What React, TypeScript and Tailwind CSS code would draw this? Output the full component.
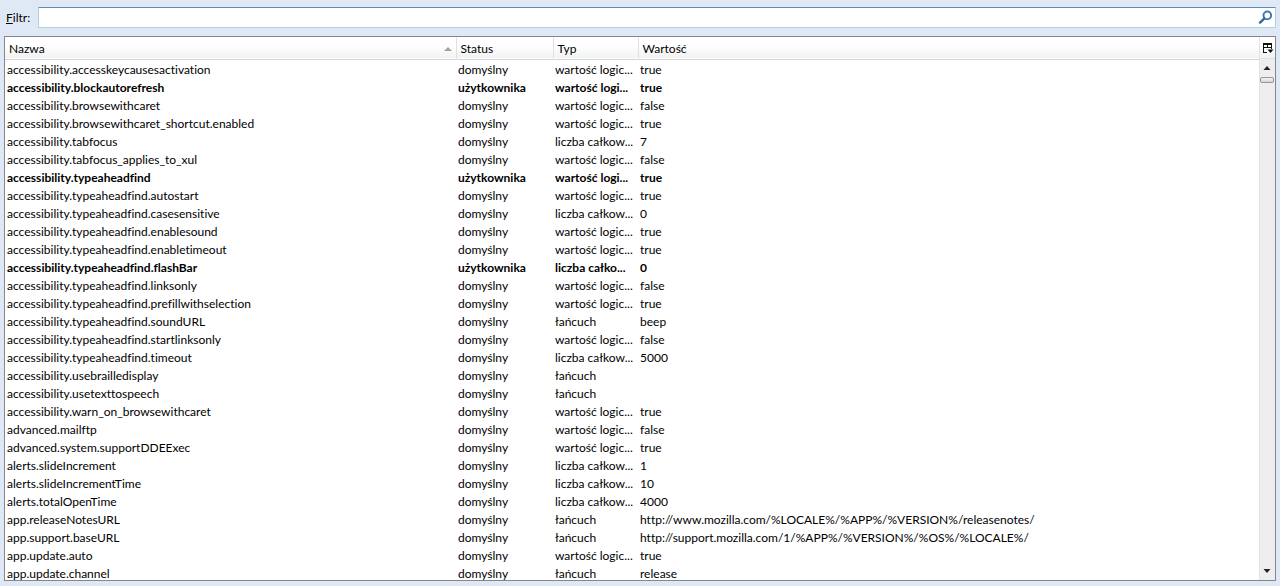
import { useState } from "react";

type TPref = {
  name: string;
  type: string;
  value: string;
  modified?: boolean;
};

const BOOL = "wartość logic...";
const INT = "liczba całkow...";
const STRING = "łańcuch";

const prefs: TPref[] = [
  { name: "accessibility.accesskeycausesactivation", type: BOOL, value: "true" },
  { name: "accessibility.blockautorefresh", type: "wartość logi...", value: "true", modified: true },
  { name: "accessibility.browsewithcaret", type: BOOL, value: "false" },
  { name: "accessibility.browsewithcaret_shortcut.enabled", type: BOOL, value: "true" },
  { name: "accessibility.tabfocus", type: INT, value: "7" },
  { name: "accessibility.tabfocus_applies_to_xul", type: BOOL, value: "false" },
  { name: "accessibility.typeaheadfind", type: "wartość logi...", value: "true", modified: true },
  { name: "accessibility.typeaheadfind.autostart", type: BOOL, value: "true" },
  { name: "accessibility.typeaheadfind.casesensitive", type: INT, value: "0" },
  { name: "accessibility.typeaheadfind.enablesound", type: BOOL, value: "true" },
  { name: "accessibility.typeaheadfind.enabletimeout", type: BOOL, value: "true" },
  { name: "accessibility.typeaheadfind.flashBar", type: "liczba całko...", value: "0", modified: true },
  { name: "accessibility.typeaheadfind.linksonly", type: BOOL, value: "false" },
  { name: "accessibility.typeaheadfind.prefillwithselection", type: BOOL, value: "true" },
  { name: "accessibility.typeaheadfind.soundURL", type: STRING, value: "beep" },
  { name: "accessibility.typeaheadfind.startlinksonly", type: BOOL, value: "false" },
  { name: "accessibility.typeaheadfind.timeout", type: INT, value: "5000" },
  { name: "accessibility.usebrailledisplay", type: STRING, value: "" },
  { name: "accessibility.usetexttospeech", type: STRING, value: "" },
  { name: "accessibility.warn_on_browsewithcaret", type: BOOL, value: "true" },
  { name: "advanced.mailftp", type: BOOL, value: "false" },
  { name: "advanced.system.supportDDEExec", type: BOOL, value: "true" },
  { name: "alerts.slideIncrement", type: INT, value: "1" },
  { name: "alerts.slideIncrementTime", type: INT, value: "10" },
  { name: "alerts.totalOpenTime", type: INT, value: "4000" },
  { name: "app.releaseNotesURL", type: STRING, value: "http://www.mozilla.com/%LOCALE%/%APP%/%VERSION%/releasenotes/" },
  { name: "app.support.baseURL", type: STRING, value: "http://support.mozilla.com/1/%APP%/%VERSION%/%OS%/%LOCALE%/" },
  { name: "app.update.auto", type: BOOL, value: "true" },
  { name: "app.update.channel", type: STRING, value: "release" },
];

const SearchIcon = () => (
  <svg className="h-4 w-4" viewBox="0 0 16 16" fill="none" aria-hidden="true">
    <circle cx="9.3" cy="5.4" r="3.8" stroke="#3f78b5" strokeWidth="2" />
    <path d="M6.2 8.6 2 12.6" stroke="#35659c" strokeWidth="2.4" strokeLinecap="round" />
  </svg>
);

const ColumnPickerIcon = () => (
  <svg className="h-3 w-3" viewBox="0 0 12 12" fill="none" aria-hidden="true">
    <path d="M1 2h9" stroke="#111" strokeWidth="2" />
    <path d="M1.5 2v8.5M5.5 2v4M9.5 2v5M1 5.5h9M1 10.5h4" stroke="#111" />
    <path d="M5.5 7.5h6l-3 3.5z" fill="#111" />
  </svg>
);

const Scrollbar = () => (
  <div className="flex flex-1 flex-col items-center border-l border-[#e3e3e3] bg-[#eeeeee] pr-px">
    <button className="flex h-[18px] w-full items-center justify-center" aria-label="W górę">
      <svg className="h-1 w-2" viewBox="0 0 8 4" aria-hidden="true">
        <path d="M0.5 4 4 0l3.5 4z" fill="#222" />
      </svg>
    </button>
    <div className="h-1.5 w-full rounded-xs border border-[#979797] bg-linear-to-b from-[#f5f5f5] to-[#d4d4d4]" />
    <button className="mt-auto flex h-[18px] w-full items-center justify-center" aria-label="W dół">
      <svg className="h-1 w-2" viewBox="0 0 8 4" aria-hidden="true">
        <path d="M0.5 0h7L4 4z" fill="#222" />
      </svg>
    </button>
  </div>
);

const App = () => {
  const [filter, setFilter] = useState("");
  const visible = prefs.filter((pref) => pref.name.toLowerCase().includes(filter.toLowerCase()));

  return (
    <div className="flex h-screen flex-col overflow-hidden bg-[#dfe9f6] px-1 pt-[7px] pb-[5px] font-['Lato',sans-serif] text-[12px] leading-[18px] text-black [font-variant-ligatures:none]">
      <div className="flex items-center">
        <label htmlFor="filter" className="w-[34px] shrink-0 pl-0.5">
          <u>F</u>iltr:
        </label>
        <div className="flex h-[21px] flex-1 items-center border border-[#b5cfe7] border-t-[#5f8db8] bg-white pr-px">
          <input
            id="filter"
            className="h-full min-w-0 flex-1 px-1 outline-none"
            value={filter}
            onChange={(e) => setFilter(e.target.value)}
          />
          <SearchIcon />
        </div>
      </div>

      <div className="mt-2 flex min-h-0 flex-1 border border-[#828790] bg-white">
        <div className="min-w-0 flex-1 overflow-hidden">
          <table className="w-full table-fixed border-collapse text-left">
            <colgroup>
              <col className="w-[451px]" />
              <col className="w-[97px]" />
              <col className="w-[85px]" />
              <col />
            </colgroup>
            <thead>
              <tr className="h-[22px] border-b border-[#d5d5d5] bg-linear-to-b from-white from-40% to-[#f1f2f4]">
                <th className="border-r border-[#dfe1e4] px-1 pt-0.5 pb-0 font-normal">
                  <div className="flex items-center justify-between">
                    Nazwa
                    <svg className="h-1 w-2" viewBox="0 0 8 4" aria-hidden="true">
                      <path d="M0 4 4 0l4 4z" fill="#a3a394" />
                    </svg>
                  </div>
                </th>
                <th className="border-r border-[#dfe1e4] px-1 pt-0.5 pb-0 font-normal">Status</th>
                <th className="border-r border-[#dfe1e4] px-1 pt-0.5 pb-0 font-normal">Typ</th>
                <th className="px-1 pt-0.5 pb-0 font-normal">Wartość</th>
              </tr>
            </thead>
            <tbody className="before:block before:h-px">
              {visible.map((pref) => (
                <tr key={pref.name} className={pref.modified ? "font-bold" : ""}>
                  <td className="px-0.5 py-0 whitespace-nowrap">{pref.name}</td>
                  <td className="px-0.5 py-0 whitespace-nowrap">{pref.modified ? "użytkownika" : "domyślny"}</td>
                  <td className="px-0.5 py-0 whitespace-nowrap">{pref.type}</td>
                  <td className="px-0.5 py-0 whitespace-nowrap">{pref.value}</td>
                </tr>
              ))}
            </tbody>
          </table>
        </div>
        <div className="flex w-4 shrink-0 flex-col">
          <button
            className="flex h-[22px] items-center justify-center border-b border-l border-[#dfe1e4] bg-linear-to-b from-white from-40% to-[#f1f2f4]"
            aria-label="Wybierz kolumny"
          >
            <ColumnPickerIcon />
          </button>
          <Scrollbar />
        </div>
      </div>
    </div>
  );
};

export default App;
